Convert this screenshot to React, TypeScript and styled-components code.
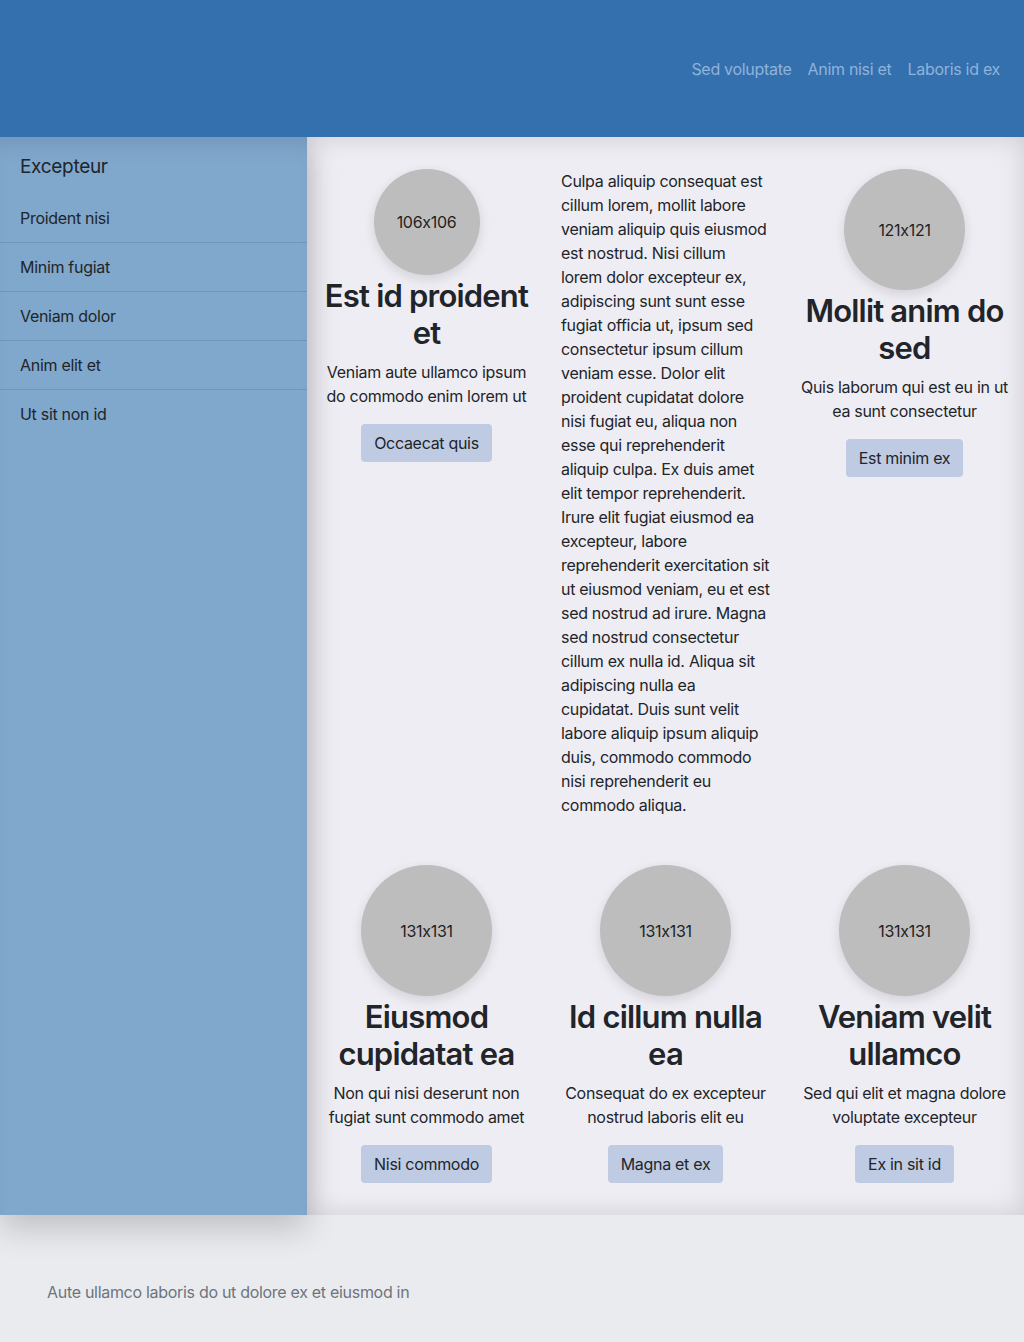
import React from "react";
import styled, { createGlobalStyle } from "styled-components";

const Global = createGlobalStyle`
  html, body { margin: 0; padding: 0; }
  body {
    font-family: Inter, "Noto Sans", "Liberation Sans", sans-serif;
    font-feature-settings: "calt" 0;
    color: #212529;
    background: #eaebef;
    font-size: 16px;
    line-height: 1.5;
    letter-spacing: -0.3px;
  }
  * { box-sizing: border-box; }
`;

const Page = styled.div`
  display: flex;
  flex-direction: column;
  min-height: 1342px;
`;

const Header = styled.header`
  height: 137px;
  background: #3470ae;
  display: flex;
  align-items: center;
  justify-content: flex-end;
  padding: 0 24px 0 0;
  position: relative;
  z-index: 2;
`;

const Nav = styled.nav`
  display: flex;
  gap: 16px;
`;

const NavLink = styled.a`
  color: #8fb3db;
  text-decoration: none;
  font-size: 16px;
`;

const Body = styled.div`
  display: flex;
  align-items: stretch;
`;

const Sidebar = styled.aside`
  width: 307px;
  flex: 0 0 307px;
  background: #80a7cc;
  box-shadow: inset 0 20px 24px -16px rgba(0, 0, 0, 0.12), 0 14px 30px rgba(0, 0, 0, 0.18);
  position: relative;
  z-index: 1;
`;

const SideTitle = styled.div`
  padding: 17px 20px 14px;
  font-size: 19px;
  line-height: 26px;
`;

const SideItem = styled.div<{ $last?: boolean }>`
  padding: 12px 20px 12px;
  font-size: 16px;
  line-height: 24px;
  border-bottom: ${(p) => (p.$last ? "none" : "1px solid #6e95bb")};
`;

const Main = styled.main`
  flex: 1;
  background: #efedf4;
  box-shadow: inset 0 0 26px rgba(0, 0, 0, 0.14);
  display: grid;
  grid-template-columns: repeat(3, 1fr);
  padding: 32px 0 32px;
  row-gap: 32px;
`;

const Cell = styled.div`
  padding: 0 15px;
  display: flex;
  flex-direction: column;
  align-items: center;
  text-align: center;
`;

const Circle = styled.div<{ $size: number }>`
  width: ${(p) => p.$size}px;
  height: ${(p) => p.$size}px;
  border-radius: 50%;
  background: #bdbdbd;
  box-shadow: 0 4px 12px rgba(0, 0, 0, 0.12);
  display: flex;
  align-items: center;
  justify-content: center;
  font-size: 16px;
  color: #222;
  flex-shrink: 0;
`;

const Title = styled.h2`
  font-size: 31px;
  font-weight: 600;
  line-height: 1.2;
  margin: 2px 0 9px;
  letter-spacing: -0.8px;
`;

const Text = styled.p`
  margin: 0 0 16px;
  font-size: 16px;
  line-height: 24px;
`;

const LongText = styled.p`
  margin: 0 0 16px;
  text-align: left;
  font-size: 16px;
  line-height: 24px;
`;

const Button = styled.button`
  font-family: inherit;
  font-feature-settings: inherit;
  letter-spacing: inherit;
  font-size: 16px;
  line-height: 24px;
  padding: 7px 13px;
  background: #bfcbe2;
  color: #212529;
  border: none;
  border-radius: 4px;
`;

const Footer = styled.footer`
  flex: 1;
  background: #eaebef;
  padding: 65px 47px 39px;
  color: #6c757d;
  font-size: 16px;
  line-height: 24px;
`;

type Card = { size: number; title: string; text: string; btn: string };

const card1: Card = {
  size: 106,
  title: "Est id proident et",
  text: "Veniam aute ullamco ipsum do commodo enim lorem ut",
  btn: "Occaecat quis",
};

const long =
  "Culpa aliquip consequat est cillum lorem, mollit labore veniam aliquip quis eiusmod est nostrud. Nisi cillum lorem dolor excepteur ex, adipiscing sunt sunt esse fugiat officia ut, ipsum sed consectetur ipsum cillum veniam esse. Dolor elit proident cupidatat dolore nisi fugiat eu, aliqua non esse qui reprehenderit aliquip culpa. Ex duis amet elit tempor reprehenderit. Irure elit fugiat eiusmod ea excepteur, labore reprehenderit exercitation sit ut eiusmod veniam, eu et est sed nostrud ad irure. Magna sed nostrud consectetur cillum ex nulla id. Aliqua sit adipiscing nulla ea cupidatat. Duis sunt velit labore aliquip ipsum aliquip duis, commodo commodo nisi reprehenderit eu commodo aliqua.";

const card3: Card = {
  size: 121,
  title: "Mollit anim do sed",
  text: "Quis laborum qui est eu in ut ea sunt consectetur",
  btn: "Est minim ex",
};

const row2: Card[] = [
  { size: 131, title: "Eiusmod cupidatat ea", text: "Non qui nisi deserunt non fugiat sunt commodo amet", btn: "Nisi commodo" },
  { size: 131, title: "Id cillum nulla ea", text: "Consequat do ex excepteur nostrud laboris elit eu", btn: "Magna et ex" },
  { size: 131, title: "Veniam velit ullamco", text: "Sed qui elit et magna dolore voluptate excepteur", btn: "Ex in sit id" },
];

const CardView = ({ c }: { c: Card }) => (
  <Cell>
    <Circle $size={c.size}>{`${c.size}x${c.size}`}</Circle>
    <Title>{c.title}</Title>
    <Text>{c.text}</Text>
    <Button>{c.btn}</Button>
  </Cell>
);

const sideItems = ["Proident nisi", "Minim fugiat", "Veniam dolor", "Anim elit et", "Ut sit non id"];

export default function App() {
  return (
    <Page>
      <Global />
      <Header>
        <Nav>
          <NavLink href="#">Sed voluptate</NavLink>
          <NavLink href="#">Anim nisi et</NavLink>
          <NavLink href="#">Laboris id ex</NavLink>
        </Nav>
      </Header>
      <Body>
        <Sidebar>
          <SideTitle>Excepteur</SideTitle>
          {sideItems.map((s, i) => (
            <SideItem key={s} $last={i === sideItems.length - 1}>
              {s}
            </SideItem>
          ))}
        </Sidebar>
        <Main>
          <CardView c={card1} />
          <Cell>
            <LongText>{long}</LongText>
          </Cell>
          <CardView c={card3} />
          {row2.map((c) => (
            <CardView key={c.title} c={c} />
          ))}
        </Main>
      </Body>
      <Footer>Aute ullamco laboris do ut dolore ex et eiusmod in</Footer>
    </Page>
  );
}
